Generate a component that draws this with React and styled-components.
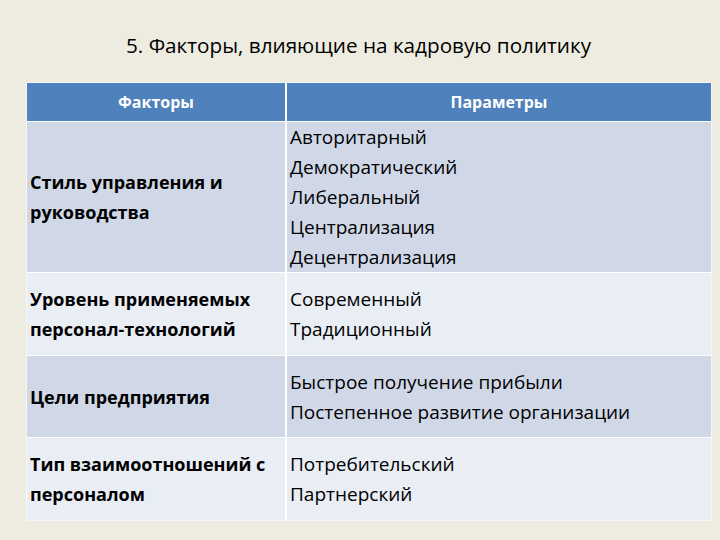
import React from "react";
import styled, { createGlobalStyle } from "styled-components";

const GlobalStyle = createGlobalStyle`
  html, body { margin: 0; padding: 0; }
  body {
    width: 720px;
    height: 540px;
    background: #eeece1;
    font-family: "Open Sans", Lato, "Noto Sans", sans-serif;
    color: #000;
  }
`;

const Slide = styled.div`
  width: 720px;
  height: 540px;
  box-sizing: border-box;
  padding: 32px 8px 0 26px;
`;

const Title = styled.h1`
  margin: 0 0 24px 0;
  padding-left: 100px;
  font-size: 20.7px;
  font-weight: 400;
  line-height: 26px;
`;

const Table = styled.div`
  display: grid;
  grid-template-columns: 258px 1fr;
  column-gap: 2px;
  row-gap: 1px;
  background: #ffffff;
  border: 1px solid #f4f6fa;
`;

const HeadCell = styled.div`
  height: 38px;
  background: #4f81bd;
  color: #fff;
  font-weight: 700;
  font-size: 16px;
  display: flex;
  align-items: center;
  justify-content: center;
`;

const Cell = styled.div`
  height: ${(p) => p.$h}px;
  background: ${(p) => (p.$odd ? "#d0d8e8" : "#e9edf4")};
  box-sizing: border-box;
  padding: 0 3px;
  display: flex;
  flex-direction: column;
  justify-content: center;
  font-size: ${(p) => (p.$bold ? 18 : 19)}px;
  line-height: 30px;
  font-weight: ${(p) => (p.$bold ? 700 : 400)};
`;

const rows = [
  { factor: ["Стиль управления и", "руководства"], params: ["Авторитарный", "Демократический", "Либеральный", "Централизация", "Децентрализация"], h: 150 },
  { factor: ["Уровень применяемых", "персонал-технологий"], params: ["Современный", "Традиционный"], h: 82 },
  { factor: ["Цели предприятия"], params: ["Быстрое получение прибыли", "Постепенное развитие организации"], h: 81 },
  { factor: ["Тип взаимоотношений с", "персоналом"], params: ["Потребительский", "Партнерский"], h: 82 },
];

export default function App() {
  return (
    <>
      <GlobalStyle />
      <Slide>
        <Title>5. Факторы, влияющие на кадровую политику</Title>
        <Table>
          <HeadCell>Факторы</HeadCell>
          <HeadCell>Параметры</HeadCell>
          {rows.map((r, i) => (
            <React.Fragment key={i}>
              <Cell $h={r.h} $odd={i % 2 === 0} $bold>
                {r.factor.map((t) => <div key={t}>{t}</div>)}
              </Cell>
              <Cell $h={r.h} $odd={i % 2 === 0}>
                {r.params.map((t) => <div key={t}>{t}</div>)}
              </Cell>
            </React.Fragment>
          ))}
        </Table>
      </Slide>
    </>
  );
}
